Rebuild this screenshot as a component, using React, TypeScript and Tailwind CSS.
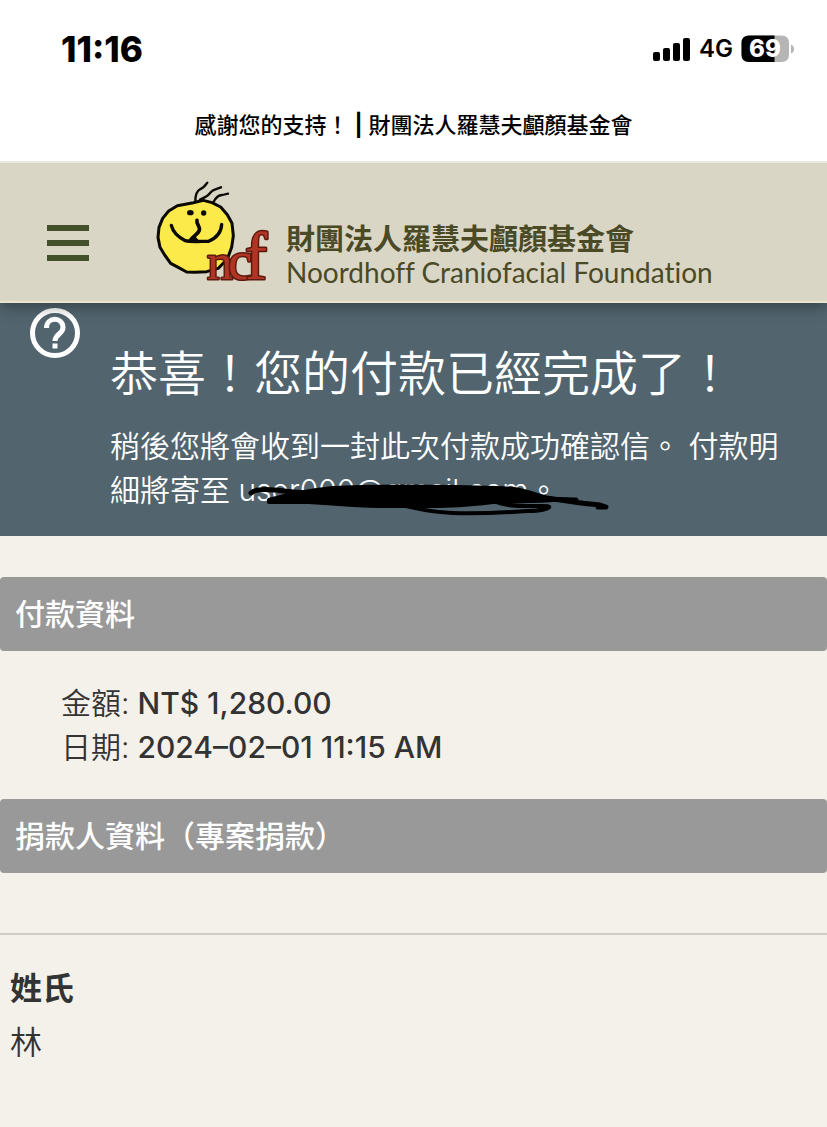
import React from 'react';

const sans = "font-['Inter','Noto_Sans_CJK_TC',sans-serif]";

const SignalIcon = () => (
  <svg width="38" height="24" viewBox="0 0 38 24" aria-hidden="true">
    <rect x="0" y="15" width="7" height="9" rx="2" />
    <rect x="10" y="11" width="7" height="13" rx="2" />
    <rect x="20" y="6" width="7" height="18" rx="2" />
    <rect x="30" y="1" width="7" height="23" rx="2" />
  </svg>
);

const BatteryIcon = () => (
  <svg width="53" height="28" viewBox="0 0 53 28" aria-label="69%">
    <path d="M8 0.500H40.500Q48 0.500 48 8V19.500Q48 27 40.500 27H8Q0.500 27 0.500 19.500V8Q0.500 0.500 8 0.500Z" fill="#b5b5b5" />
    <path d="M8 0.500H33.500V27H8Q0.500 27 0.500 19.500V8Q0.500 0.500 8 0.500Z" fill="#000" />
    <path d="M50 9.500Q53 10.500 53 14T50 18.500Z" fill="#b5b5b5" />
    <text x="24" y="22" textAnchor="middle" fill="#fff" fontSize="24" fontWeight="800" fontFamily="Inter">69</text>
  </svg>
);

const SmileyLogo = () => (
  <svg width="150" height="130" viewBox="0 0 450 390" aria-hidden="true" fill="none" strokeLinecap="round" strokeLinejoin="round">
    <path
      d="M160 101 L190 94 L216 101 L242 114 L262 137 L276 163 L280 200 L275 235 L262 270 L235 298 L200 308 L165 310 L140 309 L116 296 L92 283 L74 258 L60 235 L54 205 L57 175 L68 148 L86 126 L112 110 Z"
      fill="#fce94a"
      stroke="#0b0903"
      strokeWidth="9"
    />
    <path d="M166 96 C166 80 168 68 180 61 C192 56 196 50 202 41" stroke="#0b0903" strokeWidth="7" />
    <path d="M180 92 C196 84 204 82 212 70 C220 60 232 60 243 55" stroke="#0b0903" strokeWidth="7" />
    <path d="M220 100 C228 84 236 78 246 78 C254 78 258 74 264 74" stroke="#0b0903" strokeWidth="7" />
    <ellipse cx="151" cy="131" rx="10" ry="8" fill="#0b0903" />
    <ellipse cx="191" cy="132" rx="8" ry="8" fill="#0b0903" />
    <path d="M94 169 C98 186 110 202 136 215 C150 219 180 217 206 217 C226 208 244 192 245 166" stroke="#0b0903" strokeWidth="10" />
    <path d="M171 154 C168 166 182 172 178 184 C174 196 160 200 152 213" stroke="#0b0903" strokeWidth="11" />
    <path d="M166 202 L178 217 L148 217 Z" fill="#0b0903" />
    <text y="330" fontFamily="Liberation Serif" fill="#b03524" stroke="#5e1a0f" strokeWidth="9" paintOrder="stroke">
      <tspan x="201" fontSize="155">n</tspan>
      <tspan x="264" fontSize="165">c</tspan>
      <tspan x="315" fontSize="200">f</tspan>
    </text>
  </svg>
);

const HelpIcon = () => (
  <svg width="52" height="52" viewBox="0 0 52 52" fill="none" stroke="#fff" aria-hidden="true">
    <circle cx="26" cy="26" r="22.500" strokeWidth="5" />
    <path d="M17.500 21C17.500 9.500 34 9.500 34 20.500C34 27 26 27 26 34" strokeWidth="5" />
    <rect x="23.500" y="36.500" width="5" height="5" fill="#fff" stroke="none" />
  </svg>
);

// Marker strokes drawn over the address
const Scribble = () => (
  <svg className="absolute top-0 left-0" width="380" height="50" viewBox="0 0 380 50" fill="none" stroke="#000" strokeLinecap="round" strokeLinejoin="round" aria-hidden="true">
    <path d="M31 28 C55 21 75 18 95 16 C150 14 240 14 276 17 C290 19 305 25 315 28 C280 31 130 30 31 30 Z" fill="#000" strokeWidth="4" />
    <path d="M13 21 C18 16 32 17 46 19 C70 23 180 23 270 26 C300 28 325 27 338 28" strokeWidth="5" />
    <path d="M31 29 C70 28 100 33 140 34 C180 34 220 35 255 30" strokeWidth="4" />
    <path d="M150 32 C175 33 180 40 215 41 C250 42 270 40 290 39 C305 39 320 34 305 34 C290 34 270 35 258 30" strokeWidth="4" />
    <path d="M300 25 C325 28 340 31 362 33 L368 35 L360 35" strokeWidth="5" />
  </svg>
);

const SectionTitle: React.FC<{ children: React.ReactNode }> = ({ children }) => (
  <h2 className="rounded bg-[#999999] px-[15px] text-[30px] leading-[74px] font-medium text-white">{children}</h2>
);

const DetailRow: React.FC<{ label: string; value: string }> = ({ label, value }) => (
  <div className="flex gap-2">
    <dt className="font-[350]">{label}:</dt>
    <dd className="font-medium">{value}</dd>
  </div>
);

const App: React.FC = () => {
  return (
    <div lang="zh-Hant" className={`min-h-screen bg-[#f4f1ea] text-[#333333] ${sans}`}>
      <div className="relative z-20 bg-white text-black">
        <div className="flex h-[98px] items-center justify-between pr-[33px] pl-[61px]">
          <span className="text-[35px] font-extrabold">11:16</span>
          <div className="flex items-center gap-2">
            <SignalIcon />
            <span className="text-2xl font-semibold">4G</span>
            <BatteryIcon />
          </div>
        </div>
        <p className="pt-[6px] pb-[15px] text-center text-[22px] leading-[42px] font-medium">
          感謝您的支持！ <b>|</b> 財團法人羅慧夫顱顏基金會
        </p>
      </div>

      <header className="relative z-10 flex h-[142px] items-center border-y-2 border-t-[#eae8e0] border-b-[#e9e5d0] bg-[#dad6c5] pl-[47px] shadow-[0_4px_14px_rgba(0,0,0,0.35)]">
        <button type="button" aria-label="選單" className="flex w-[42px] flex-col gap-[9px] pt-[22px]">
          <span className="h-[6px] bg-[#42512a]" />
          <span className="h-[6px] bg-[#42512a]" />
          <span className="h-[6px] bg-[#42512a]" />
        </button>
        <a href="#" className="ml-[51px] flex items-center pt-1 text-[#4b4a26]">
          <SmileyLogo />
          <span className="-ml-1 pt-[42px] whitespace-nowrap">
            <span className="block text-[29px] leading-[34px] font-bold">財團法人羅慧夫顱顏基金會</span>
            <span className="block font-['Lato',sans-serif] text-[28px] leading-[30px] [font-variant-ligatures:none]">Noordhoff Craniofacial Foundation</span>
          </span>
        </a>
      </header>

      <section className="flex bg-[#52656f] pr-[30px] pb-6 pl-[29px] text-white">
        <div className="mr-[29px] shrink-0 pt-1">
          <HelpIcon />
        </div>
        <div className="pt-[41px] font-[350]">
          <h1 className="mb-5 text-5xl leading-[60px]">恭喜！您的付款已經完成了！</h1>
          <p className="text-[30px] leading-[44px]">
            稍後您將會收到一封此次付款成功確認信。 付款明細將寄至{' '}
            <span className="relative">
              user000@gmail.com
              <Scribble />
            </span>
            。
          </p>
        </div>
      </section>

      <main className="pt-[41px]">
        <SectionTitle>付款資料</SectionTitle>
        <dl className="px-[61px] py-[30px] text-[30px] leading-[44px]">
          <DetailRow label="金額" value="NT$ 1,280.00" />
          <DetailRow label="日期" value="2024–02–01 11:15 AM" />
        </dl>
        <SectionTitle>捐款人資料（專案捐款）</SectionTitle>
        <dl className="mt-[60px] border-t-2 border-[#cfccc5] px-[10px] pt-[27px] text-[32px] leading-[54px]">
          <dt className="font-bold">姓氏</dt>
          <dd className="font-[350]">林</dd>
        </dl>
      </main>
    </div>
  );
};

export default App;
